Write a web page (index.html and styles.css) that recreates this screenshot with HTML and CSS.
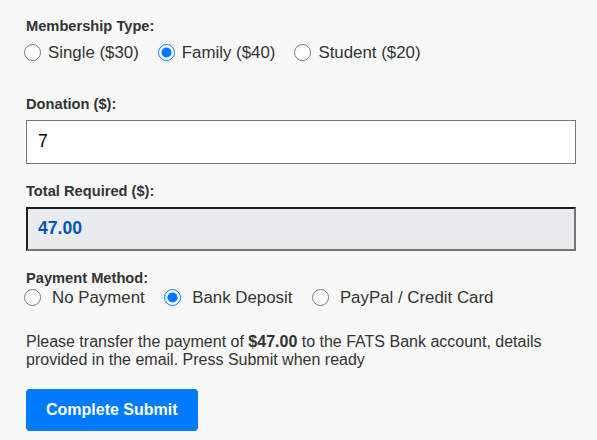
FILE: index.html
```html
<!DOCTYPE html>
<html lang="en">
<head>
<meta charset="utf-8">
<title>Membership</title>
<link rel="stylesheet" href="styles.css">
</head>
<body>
<form class="form">
  <div class="group group-membership">
    <span class="label">Membership Type:</span>
    <div class="options options-membership">
      <label class="opt"><input type="radio" name="type"><span>Single ($30)</span></label>
      <label class="opt"><input type="radio" name="type" checked><span>Family ($40)</span></label>
      <label class="opt"><input type="radio" name="type"><span>Student ($20)</span></label>
    </div>
  </div>

  <div class="group group-donation">
    <label class="label" for="donation">Donation ($):</label>
    <input class="field field-input" id="donation" type="text" value="7">
  </div>

  <div class="group group-total">
    <label class="label" for="total">Total Required ($):</label>
    <input class="field field-total" id="total" type="text" value="47.00" readonly>
  </div>

  <div class="group group-payment">
    <span class="label">Payment Method:</span>
    <div class="options options-payment">
      <label class="opt"><input type="radio" name="pay"><span>No Payment</span></label>
      <label class="opt"><input type="radio" name="pay" checked><span>Bank Deposit</span></label>
      <label class="opt"><input type="radio" name="pay"><span>PayPal / Credit Card</span></label>
    </div>
  </div>

  <p class="note">Please transfer the payment of <strong>$47.00</strong> to the FATS Bank account, details provided in the email. Press Submit when ready</p>

  <button type="button" class="submit">Complete Submit</button>
</form>
</body>
</html>
```
FILE: styles.css
```css
html, body {
  margin: 0;
  background: #f8f8f8;
}

body {
  font-family: "Liberation Sans", Arial, sans-serif;
  color: #333;
}

.form {
  padding: 18px 21px 0 26px;
  width: 550px;
}

.label {
  display: block;
  font-weight: bold;
  font-size: 14.67px;
  line-height: 17px;
  color: #333;
}

.options {
  display: flex;
  align-items: center;
  height: 19px;
  margin-left: -2px;
  font-size: 16.85px;
  color: #333;
}

.opt {
  display: inline-flex;
  align-items: center;
  line-height: 19px;
}

.opt input {
  width: 17px;
  height: 17px;
  margin: 0;
}

.options-membership {
  margin-top: 8px;
}

.options-membership .opt {
  gap: 7px;
  margin-right: 19px;
}

.options-payment {
  margin-top: 1px;
}

.options-payment .opt {
  gap: 11px;
  margin-right: 19.5px;
}

.group-membership {
  margin-bottom: 33.5px;
}

.group-donation,
.group-total {
  margin-bottom: 19.3px;
}

.field {
  display: block;
  box-sizing: border-box;
  width: 550px;
  height: 44px;
  margin-top: 7px;
  font-family: "Liberation Sans", Arial, sans-serif;
  font-size: 17.6px;
  outline: none;
}

.field-input {
  background: #fff;
  border: 1px solid #767676;
  padding: 0 11px;
  color: #000;
}

.field-total {
  background: #e9ecef;
  border-width: 2px;
  border-style: solid;
  border-color: #1f1f1f #767676 #767676 #1f1f1f;
  padding: 0 10px;
  color: #0056b3;
  font-weight: bold;
}

.note {
  margin: 26px 0 0;
  font-size: 16px;
  line-height: 18px;
  color: #333;
}

.note strong {
  color: #333;
}

.submit {
  display: block;
  margin-top: 20px;
  padding: 12px 20px;
  border: none;
  border-radius: 4px;
  background: #007bff;
  color: #fff;
  font-family: "Liberation Sans", Arial, sans-serif;
  font-size: 16px;
  font-weight: bold;
  line-height: 18px;
}
```
